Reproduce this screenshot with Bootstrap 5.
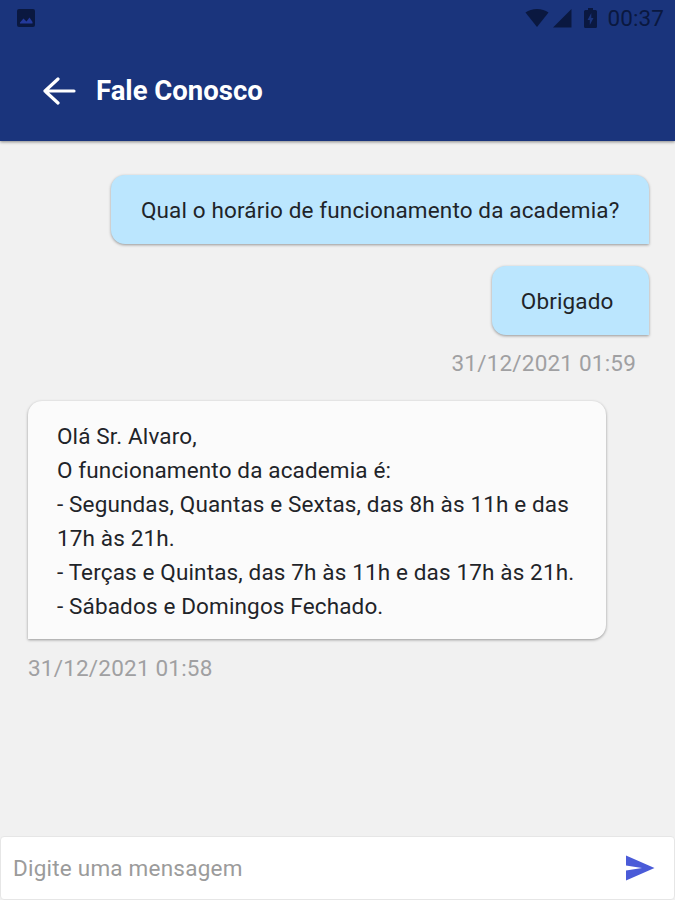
<!DOCTYPE html>
<html lang="pt-BR">
<head>
<meta charset="utf-8">
<meta name="viewport" content="width=device-width, initial-scale=1">
<title>Fale Conosco</title>
<link href="https://cdn.jsdelivr.net/npm/bootstrap@5.3.0/dist/css/bootstrap.min.css" rel="stylesheet">
<style>
body { font-family: Roboto, sans-serif; background: #f1f1f1; font-size: 22.5px; letter-spacing: .14px; color: #1f2429; }
.topbar { height: 141px; background: #1a347c; box-shadow: 0 1px 3px rgba(0,0,0,.45); }
.statusbar { height: 36px; padding: 0 11px 0 17px; color: #0a1840; }
.clock { font-size: 22.5px; line-height: 36px; letter-spacing: .1px; margin-left: 10px; }
.battery { margin-left: 12px; }
.titlebar { height: 105px; padding: 5px 0 0 43px; }
.titlebar h1 { font-size: 27.5px; line-height: 36px; letter-spacing: 0; margin-left: 20px; }
.chat { padding: 34px 26px 0 28px; }
.bubble { line-height: 34px; white-space: nowrap; box-shadow: 0 1px 3px rgba(0,0,0,.38); }
.sent { background: #bbe6fe; border-radius: 14px 14px 0 14px; padding: 18px 29.5px 17px; }
.sent + .sent { margin-top: 22px; padding: 18px 35.5px 17px 28.5px; }
.received { background: #fbfbfb; border-radius: 14px 14px 14px 0; padding: 18px 28px 16px 29px; width: 578px; margin-top: 21px; }
.stamp { color: #a0a0a2; line-height: 34px; letter-spacing: .2px; margin-top: 12px; }
.sent-time { margin: 11px 13px 0 0; }
.composer { height: 64px; border: 1px solid #e6e6e6; border-radius: 4px; padding: 0 19px 0 12px; }
.composer input { letter-spacing: .22px; font-size: 22.5px; line-height: 34px; }
.composer input::placeholder { color: #9b9b9b; opacity: 1; }
.composer input:focus { box-shadow: none; }
</style>
</head>
<body class="vh-100 d-flex flex-column overflow-hidden">
<header class="topbar flex-shrink-0 position-relative">
  <div class="statusbar d-flex align-items-center">
    <svg width="19" height="19" viewBox="0 0 19 19"><path fill="currentColor" d="M2 0h14a2 2 0 0 1 2 2v14a2 2 0 0 1-2 2H2a2 2 0 0 1-2-2V2a2 2 0 0 1 2-2Z"/><path fill="#23399a" d="M3 14.500h12.500v-1.500L12.500 8.500l-3 4L6.500 9.500 3 13.500Z"/></svg>
    <svg class="ms-auto" width="24" height="20" viewBox="0 0 25 20"><path fill="currentColor" d="M12.500 19.500.5 4.200Q5.500.5 12.500.5T24.500 4.200Z"/></svg>
    <svg class="ms-1" width="19" height="20" viewBox="0 0 19 20"><path fill="currentColor" d="M0 19.500 18.500 1v18.500Z"/></svg>
    <svg class="battery" width="13" height="21" viewBox="0 0 13 21"><path fill="currentColor" fill-rule="evenodd" d="M4 0h5v2h2.500A1.500 1.500 0 0 1 13 3.500v15a1.500 1.500 0 0 1-1.500 1.500h-10A1.500 1.500 0 0 1 0 18.500v-15A1.500 1.500 0 0 1 1.500 2H4ZM7.300 5 3.500 12h2.300v5L9.500 10H7.300Z"/></svg>
    <span class="clock">00:37</span>
  </div>
  <div class="titlebar d-flex align-items-center text-white">
    <svg width="33" height="28" viewBox="0 0 33 28" fill="none" stroke="currentColor" stroke-width="3.200" stroke-linecap="round" stroke-linejoin="round"><path d="M31 14H2M15 2 2 14l13 12"/></svg>
    <h1 class="fw-bold mb-0">Fale Conosco</h1>
  </div>
</header>
<main class="chat flex-grow-1">
  <section class="d-flex flex-column align-items-end">
    <div class="bubble sent">Qual o horário de funcionamento da academia?</div>
    <div class="bubble sent">Obrigado</div>
    <time class="stamp sent-time">31/12/2021 01:59</time>
  </section>
  <section class="d-flex flex-column align-items-start">
    <div class="bubble received">Olá Sr. Alvaro,<br>O funcionamento da academia é:<br>- Segundas, Quantas e Sextas, das 8h às 11h e das<br>17h às 21h.<br>- Terças e Quintas, das 7h às 11h e das 17h às 21h.<br>- Sábados e Domingos Fechado.</div>
    <time class="stamp">31/12/2021 01:58</time>
  </section>
</main>
<form class="composer d-flex align-items-center bg-white flex-shrink-0">
  <input class="form-control border-0 p-0 bg-transparent" type="text" placeholder="Digite uma mensagem" aria-label="Mensagem">
  <button class="btn border-0 p-0 d-flex" type="button" aria-label="Enviar"><svg width="30" height="26" viewBox="0 0 30 26"><path fill="#4a5bd8" d="M1 .5 29.500 13 1 25.500V15.500L17 13 1 10.500Z"/></svg></button>
</form>
<script src="https://cdn.jsdelivr.net/npm/bootstrap@5.3.0/dist/js/bootstrap.bundle.min.js"></script>
</body>
</html>
